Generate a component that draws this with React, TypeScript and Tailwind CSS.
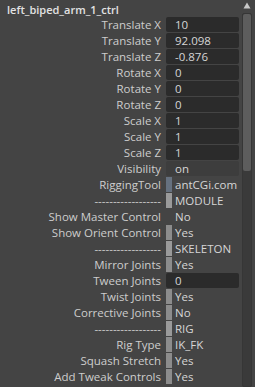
import React from 'react';

type Row = {
    label: string;
    value: string;
    kind: 'field' | 'soft' | 'swatch' | 'plain';
    swatch?: string;
};

const DASH = '------------------';

// Channel box attributes, top to bottom
const rows: Row[] = [
    { label: 'Translate X', value: '10', kind: 'field' },
    { label: 'Translate Y', value: '92.098', kind: 'field' },
    { label: 'Translate Z', value: '-0.876', kind: 'field' },
    { label: 'Rotate X', value: '0', kind: 'field' },
    { label: 'Rotate Y', value: '0', kind: 'field' },
    { label: 'Rotate Z', value: '0', kind: 'field' },
    { label: 'Scale X', value: '1', kind: 'field' },
    { label: 'Scale Y', value: '1', kind: 'field' },
    { label: 'Scale Z', value: '1', kind: 'field' },
    { label: 'Visibility', value: 'on', kind: 'soft' },
    { label: 'RiggingTool', value: 'antCGi.com', kind: 'swatch', swatch: 'bg-[#66717f]' },
    { label: DASH, value: 'MODULE', kind: 'swatch', swatch: 'bg-[#9a9a9a]' },
    { label: 'Show Master Control', value: 'No', kind: 'plain' },
    { label: 'Show Orient Control', value: 'Yes', kind: 'swatch', swatch: 'bg-[#8c8c8c]' },
    { label: DASH, value: 'SKELETON', kind: 'swatch', swatch: 'bg-[#9a9a9a]' },
    { label: 'Mirror Joints', value: 'Yes', kind: 'swatch', swatch: 'bg-[#8c8c8c]' },
    { label: 'Tween Joints', value: '0', kind: 'field' },
    { label: 'Twist Joints', value: 'Yes', kind: 'swatch', swatch: 'bg-[#8c8c8c]' },
    { label: 'Corrective Joints', value: 'No', kind: 'swatch', swatch: 'bg-[#8c8c8c]' },
    { label: DASH, value: 'RIG', kind: 'swatch', swatch: 'bg-[#9a9a9a]' },
    { label: 'Rig Type', value: 'IK_FK', kind: 'swatch', swatch: 'bg-[#8c8c8c]' },
    { label: 'Squash Stretch', value: 'Yes', kind: 'swatch', swatch: 'bg-[#8c8c8c]' },
    { label: 'Add Tweak Controls', value: 'Yes', kind: 'swatch', swatch: 'bg-[#8c8c8c]' },
];

function Value({ row }: { row: Row }) {
    if (row.kind === 'field') {
        return (
            <div className="flex h-[15px] w-[73px] items-center rounded-[2px] bg-[#2b2b2b] pl-[9px] text-[#d6d6d6]">
                {row.value}
            </div>
        );
    }
    if (row.kind === 'soft') {
        return (
            <div className="flex h-[15px] w-[73px] items-center rounded-[2px] bg-[#3d3d3d] pl-[9px] text-[#d6d6d6]">
                {row.value}
            </div>
        );
    }
    return (
        <div className="flex h-[15px] w-[73px] items-center">
            <div className={`h-[15px] w-[6px] ${row.kind === 'swatch' ? row.swatch : ''}`} />
            <span className="pl-[3px] text-[#d6d6d6]">{row.value}</span>
        </div>
    );
}

export default function App() {
    return (
        <div
            className="flex h-[387px] w-[255px] overflow-hidden bg-[#444444] text-[11.5px] leading-none"
            style={{ fontFamily: '"Open Sans", "Noto Sans", sans-serif' }}
        >
            {/* Attribute list */}
            <div className="flex w-[241px] flex-col">
                <div className="h-[17px] pl-[7px] pt-[4px] text-[11px] font-semibold text-[#e2e2e2]">left_biped_arm_1_ctrl</div>
                {rows.map((row, i) => (
                    <div key={i} className="flex h-[16px] items-start">
                        <div className="h-[15px] w-[161px] whitespace-nowrap text-right leading-[15px] text-[#cdcdcd]">
                            {row.label}
                        </div>
                        <div className="ml-[5px]">
                            <Value row={row} />
                        </div>
                    </div>
                ))}
            </div>

            {/* Scrollbar */}
            <div className="flex w-[12px] flex-col items-center pt-[2px]">
                <svg width="8" height="7" viewBox="0 0 8 7" className="mb-[4px]">
                    <polygon points="4,0.5 7.5,6.5 0.5,6.5" fill="#c8c8c8" />
                </svg>
                <div className="flex w-[10px] flex-1 flex-col rounded-[2px] border border-[#363636] bg-[#3a3a3a]">
                    <div className="h-[157px] rounded-[2px] bg-[#5d5d5d]" />
                </div>
            </div>
        </div>
    );
}
